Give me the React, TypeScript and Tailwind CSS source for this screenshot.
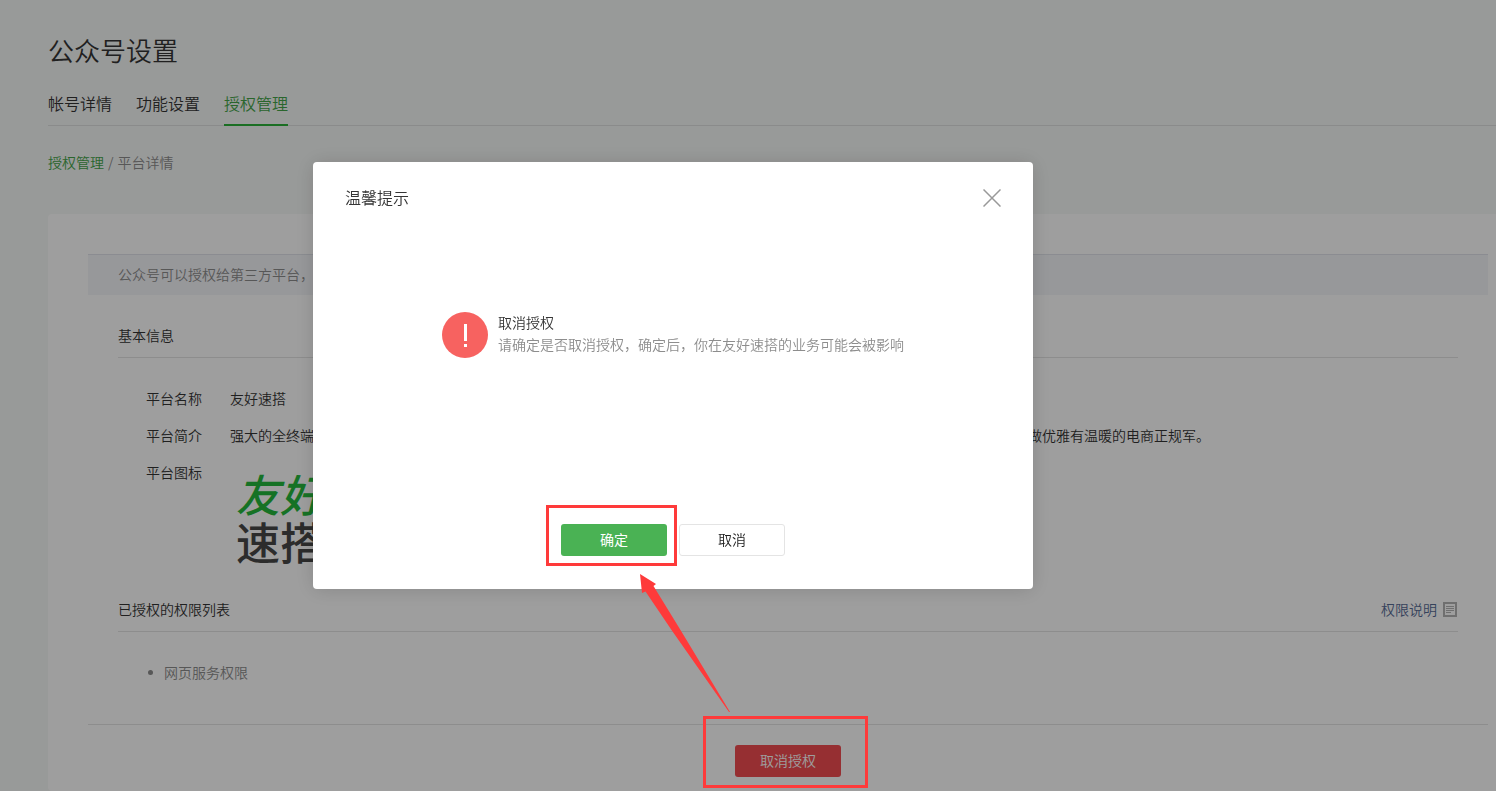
import { useState } from 'react';
import type { ReactNode } from 'react';
import clsx from 'clsx';

const tabs = ['帐号详情', '功能设置', '授权管理'];
const permissions = ['网页服务权限'];

function DocIcon() {
  return (
    <svg width="14" height="15" viewBox="0 0 14 15" fill="none" stroke="#b4b4b4" aria-hidden="true">
      <rect x="1" y="1" width="12" height="13" strokeWidth="2" />
      <path d="M3 4.5h8M3 6.5h8M3 8.5h8M3 10.5h5" />
    </svg>
  );
}

function PlatformLogo() {
  return (
    <div className="pt-[7px] pl-1.5 text-[44px] leading-[48px] font-medium whitespace-nowrap">
      <span className="text-[#25b93c] italic">友好</span>
      <br />
      <span className="text-[#474747]">速搭</span>
    </div>
  );
}

function InfoRow({ label, children }: { label: string; children: ReactNode }) {
  return (
    <div className="flex">
      <dt className="w-[84px] shrink-0 leading-5">{label}</dt>
      <dd className="min-w-0 flex-1 leading-5 whitespace-nowrap">{children}</dd>
    </div>
  );
}

function SectionTitle({ title, children }: { title: string; children?: ReactNode }) {
  return (
    <div className="flex items-center justify-between border-b border-[#e4e4e4] pb-3 leading-5">
      <h2>{title}</h2>
      {children}
    </div>
  );
}

function ConfirmDialog({ onClose }: { onClose: () => void }) {
  return (
    <div className="fixed inset-0 z-40 flex items-start justify-center bg-black/38 pt-[162px] pr-[150px]">
      <div
        role="dialog"
        aria-modal="true"
        aria-labelledby="dialog-title"
        className="w-[720px] rounded bg-white px-8 pt-[23px] pb-[33px] shadow-[0_1px_20px_rgba(0,0,0,0.15)]"
      >
        <div className="flex items-center justify-between">
          <h2 id="dialog-title" className="pb-0.5 text-base leading-6 text-[#353535]">
            温馨提示
          </h2>
          <button type="button" aria-label="关闭" onClick={onClose}>
            <svg width="18" height="18" viewBox="0 0 18 18" stroke="#999" strokeWidth="1.5">
              <path d="M.5.5l17 17M17.5.5l-17 17" />
            </svg>
          </button>
        </div>

        <div className="flex justify-center gap-2.5 pt-[100px] pb-[166px]">
          <svg width="46" height="46" viewBox="0 0 46 46" className="mt-px" aria-hidden="true">
            <circle cx="23" cy="23" r="23" fill="#f76260" />
            <path d="M22 12h3v17h-3zM22 32h3v3h-3z" fill="#fff" />
          </svg>
          <div className="leading-[22px]">
            <p className="text-[#353535]">取消授权</p>
            <p className="text-[#8d8d8d]">请确定是否取消授权，确定后，你在友好速搭的业务可能会被影响</p>
          </div>
        </div>

        <div className="flex justify-center gap-3">
          <div className="relative">
            <button
              type="button"
              onClick={onClose}
              className="block h-8 w-[106px] rounded-[3px] bg-[#4ab254] pb-0.5 font-normal text-white"
            >
              确定
            </button>
            <span className="pointer-events-none absolute -top-[19px] -right-2.5 -bottom-2.5 -left-[15px] border-3 border-[#fe3a3a]" />
            {/* стрелка-подсказка */}
            <svg
              width="92"
              height="140"
              viewBox="0 0 92 140"
              fill="#fe3a3a"
              className="pointer-events-none absolute top-[49px] left-[78px]"
            >
              <path d="M1 1L17 11 14.500 13 41.500 57 91 139 90 139 32.500 57 6.500 18.500 3 20Z" />
            </svg>
          </div>
          <button
            type="button"
            onClick={onClose}
            className="h-8 w-[106px] rounded-[3px] border border-[#e4e4e4] bg-white pb-0.5 text-[#222]"
          >
            取消
          </button>
        </div>
      </div>
    </div>
  );
}

export default function App() {
  const [activeTab, setActiveTab] = useState('授权管理');
  const [open, setOpen] = useState(true);

  return (
    <div className="flex min-h-screen flex-col overflow-hidden bg-[#f6f8f7] pl-12 font-['Noto_Sans_CJK_SC',sans-serif] text-sm font-[350] text-[#353535]">
      <header className="border-b border-[#dfe1e0] pt-8">
        <h1 className="text-[26px] leading-9">公众号设置</h1>
        <nav className="-mb-px flex gap-6 pt-[23px]">
          {tabs.map((tab) => (
            <button
              key={tab}
              type="button"
              onClick={() => setActiveTab(tab)}
              className={clsx(
                'border-b-2 pb-[9px] text-base leading-6',
                tab === activeTab ? 'border-[#2bb239] text-[#44a549]' : 'border-transparent',
              )}
            >
              {tab}
            </button>
          ))}
        </nav>
      </header>

      <div className="flex gap-1 pt-[26px] leading-5 text-[#8d8d8d]">
        <a href="#auth" className="text-[#44a549]">
          授权管理
        </a>
        <span>/</span>
        <span>平台详情</span>
      </div>

      <main className="mt-[42px] flex-1 rounded-l bg-white pt-10 pr-2 pb-3.5 pl-10">
        <p className="border-t border-[#e0e3ea] bg-[#f4f5f9] px-[30px] pt-[9px] pb-[11px] leading-5 text-[#8d8d8d]">
          公众号可以授权给第三方平台，
        </p>

        <section className="px-[30px] pt-[30px]">
          <SectionTitle title="基本信息" />
          <dl className="flex flex-col gap-[17px] pt-[30px] pl-7">
            <InfoRow label="平台名称">友好速搭</InfoRow>
            <InfoRow label="平台简介">
              <div className="flex gap-[714px]">
                <span>强大的全终端</span>
                <span>做优雅有温暖的电商正规军。</span>
              </div>
            </InfoRow>
            <InfoRow label="平台图标">
              <PlatformLogo />
            </InfoRow>
          </dl>
        </section>

        <section className="px-[30px] pt-[34px]">
          <SectionTitle title="已授权的权限列表">
            <a href="#permissions" className="flex items-center gap-1.5 pr-px text-[#576b95]">
              权限说明
              <DocIcon />
            </a>
          </SectionTitle>
          <ul className="pt-[30px] pb-[42px] pl-[30px] leading-5 text-[#8d8d8d]">
            {permissions.map((name) => (
              <li key={name} className="flex items-center gap-[11px]">
                <i className="size-[5px] rounded-full bg-[#8d8d8d]" />
                {name}
              </li>
            ))}
          </ul>
        </section>

        <footer className="flex justify-center border-t border-[#e4e4e4] pt-5">
          <div className="relative">
            <button
              type="button"
              onClick={() => setOpen(true)}
              className="block h-8 w-[106px] rounded-[3px] bg-[#f24c51] pb-0.5 text-white"
            >
              取消授权
            </button>
            <span className="pointer-events-none absolute -top-[29px] -right-[27px] -bottom-[11px] -left-8 z-50 border-3 border-[#fe3a3a]" />
          </div>
        </footer>
      </main>

      {open && <ConfirmDialog onClose={() => setOpen(false)} />}
    </div>
  );
}
